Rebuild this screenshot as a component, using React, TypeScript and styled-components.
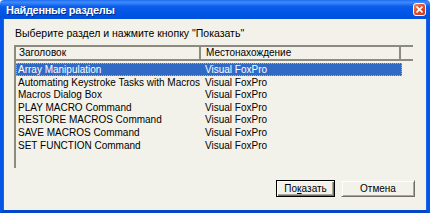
import styled, { createGlobalStyle } from "styled-components"

const GlobalStyle = createGlobalStyle`
  html, body {
    margin: 0;
    padding: 0;
    overflow: hidden;
    background: #ffffff;
  }
`

const Window = styled.div`
  width: 430px;
  height: 213px;
  display: flex;
  flex-direction: column;
  font-family: "Liberation Sans", Arial, sans-serif;
  font-size: 10px;
  color: #000;
`

const TitleBar = styled.div`
  height: 19px;
  flex: none;
  display: flex;
  align-items: center;
  justify-content: space-between;
  padding: 0 4px 0 6px;
  background: linear-gradient(to bottom, #1f6cf0 0%, #3d8bfb 12%, #0b5ceb 35%, #0055e5 70%, #0050dc 100%);
  border-radius: 4px 4px 0 0;
`

const Title = styled.span`
  font-size: 11px;
  font-weight: bold;
  color: #ffffff;
  text-shadow: 1px 1px 0 #0a2a8a;
  letter-spacing: -0.3px;
`

const CloseButton = styled.div`
  width: 13px;
  height: 13px;
  border: 1px solid #ffffff;
  border-radius: 3px;
  background: linear-gradient(135deg, #f08a6c 0%, #e0502f 45%, #c8381a 100%);
  display: flex;
  align-items: center;
  justify-content: center;
  box-sizing: border-box;
`

const Body = styled.div`
  flex: 1;
  display: flex;
  flex-direction: column;
  background: #f3f2ea;
  border-left: 3px solid #0556e6;
  border-right: 3px solid #0556e6;
  border-bottom: 3px solid #0447c8;
  box-shadow: inset 1px 0 #1a63ea, inset -1px 0 #1a63ea;
`

const Prompt = styled.div`
  margin: 8px 0 0 12px;
  line-height: 13px;
  font-size: 10.5px;
`

const Grid = styled.div`
  margin: 5px 0 0 11px;
  width: 399px;
  height: 123px;
  border-left: 2px solid #8d8a7f;
  box-sizing: border-box;
  display: flex;
  flex-direction: column;
`

const HeaderRow = styled.div`
  display: flex;
  height: 16px;
  border-top: 2px solid #8d8a7f;
  border-bottom: 2px solid #8d8a7f;
  box-sizing: border-box;
  margin-left: -2px;
`

const HeaderCell = styled.div<{ $w: number }>`
  width: ${(p) => p.$w}px;
  flex: none;
  padding-left: 5px;
  line-height: 12px;
  box-sizing: border-box;
  border-right: 2px solid #8d8a7f;
`

const Rows = styled.div`
  padding-top: 2px;
  display: flex;
  flex-direction: column;
`

const Row = styled.div<{ $selected?: boolean }>`
  display: flex;
  height: 12.6px;
  line-height: 11px;
  width: 386px;
  box-sizing: border-box;
  background: ${(p) => (p.$selected ? "#316ac5" : "transparent")};
  color: ${(p) => (p.$selected ? "#ffffff" : "#000000")};
  border: 1px dotted ${(p) => (p.$selected ? "#f0a23a" : "transparent")};
`

const Cell = styled.div<{ $w: number }>`
  width: ${(p) => p.$w}px;
  flex: none;
  padding-left: 1px;
  white-space: nowrap;
`

const ButtonBar = styled.div`
  display: flex;
  justify-content: flex-end;
  gap: 6px;
  margin-top: 12px;
  padding-right: 12px;
`

const Button = styled.div<{ $default?: boolean; $w: number }>`
  width: ${(p) => p.$w}px;
  height: 17px;
  box-sizing: border-box;
  display: flex;
  align-items: center;
  justify-content: center;
  line-height: 12px;
  border: 1px solid ${(p) => (p.$default ? "#000000" : "transparent")};
  box-shadow: ${(p) =>
    p.$default
      ? "inset 1px 1px #ffffff, inset -1px -1px #716f64, inset -2px -2px #aca899"
      : "inset 1px 1px #ffffff, inset -1px -1px #aca899"};
  border-right-color: ${(p) => (p.$default ? "#000" : "#716f64")};
  border-bottom-color: ${(p) => (p.$default ? "#000" : "#716f64")};
`

const Underline = styled.span`
  text-decoration: underline;
`

const items = [
  "Array Manipulation",
  "Automating Keystroke Tasks with Macros",
  "Macros Dialog Box",
  "PLAY MACRO Command",
  "RESTORE MACROS Command",
  "SAVE MACROS Command",
  "SET FUNCTION Command",
]

export default function App() {
  return (
    <Window>
      <GlobalStyle />
      <TitleBar>
        <Title>Найденные разделы</Title>
        <CloseButton>
          <svg width="7" height="7" viewBox="0 0 7 7">
            <path d="M0.5 0.5 L6.5 6.5 M6.5 0.5 L0.5 6.5" stroke="#ffffff" strokeWidth="1.6" />
          </svg>
        </CloseButton>
      </TitleBar>
      <Body>
        <Prompt>Выберите раздел и нажмите кнопку "Показать"</Prompt>
        <Grid>
          <HeaderRow>
            <HeaderCell $w={187}>Заголовок</HeaderCell>
            <HeaderCell $w={200}>Местонахождение</HeaderCell>
          </HeaderRow>
          <Rows>
            {items.map((title, i) => (
              <Row key={title} $selected={i === 0}>
                <Cell $w={186}>{title}</Cell>
                <Cell $w={198}>Visual FoxPro</Cell>
              </Row>
            ))}
          </Rows>
        </Grid>
        <ButtonBar>
          <Button $default $w={59}>
            <span>
              По<Underline>к</Underline>азать
            </span>
          </Button>
          <Button $w={74}>Отмена</Button>
        </ButtonBar>
      </Body>
    </Window>
  )
}
